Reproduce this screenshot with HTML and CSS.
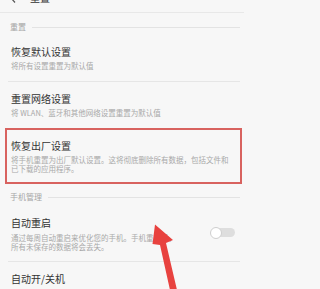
FILE: index.html
```html
<!DOCTYPE html>
<html lang="zh">
<head>
<meta charset="utf-8">
<title>重置</title>
<link rel="stylesheet" href="styles.css">
</head>
<body>
<div class="screen">
  <header class="topbar">
    <span class="back"><svg width="6" height="10" viewBox="0 0 6 10"><polyline points="5,0.5 1,5 5,9.5" fill="none" stroke="#555" stroke-width="1.2"/></svg></span>
    <span class="top-title">重置</span>
  </header>
  <main class="list">
    <div class="section-head"><span>重置</span></div>
    <div class="item">
      <div class="item-title">恢复默认设置</div>
      <div class="item-sub">将所有设置重置为默认值</div>
    </div>
    <div class="item">
      <div class="item-title">重置网络设置</div>
      <div class="item-sub">将 WLAN、蓝牙和其他网络设置重置为默认值</div>
    </div>
    <div class="item item-last item-marked">
      <div class="item-title">恢复出厂设置</div>
      <div class="item-sub">将手机重置为出厂默认设置。这将彻底删除所有数据，包括文件和已下载的应用程序。</div>
    </div>
    <div class="section-head"><span>手机管理</span></div>
    <div class="item item-toggle">
      <div class="item-text">
        <div class="item-title">自动重启</div>
        <div class="item-sub">通过每周自动重启来优化您的手机。手机重启后，所有未保存的数据将会丢失。</div>
      </div>
      <span class="switch"></span>
    </div>
    <div class="item item-last">
      <div class="item-title">自动开/关机</div>
    </div>
  </main>
  <svg class="arrow" width="244" height="289" viewBox="0 0 244 289">
    <polygon points="155,224.5 173,240 166,243 177,290 170,290 160,245 152.5,244" fill="#e8423f"/>
  </svg>
</div>
</body>
</html>
```

FILE: styles.css
```css
html, body {
  margin: 0;
  padding: 0;
  background: #f7f7f7;
}

body {
  font-family: "Noto Sans CJK SC", "Noto Sans", sans-serif;
}

.screen {
  position: relative;
  width: 244px;
  height: 289px;
  overflow: hidden;
}

.topbar {
  height: 12px;
  border-bottom: 1px solid #e8e8e8;
  display: flex;
  align-items: flex-end;
}

.back {
  display: block;
  width: 6px;
  height: 10px;
  margin: 0 0 9px 10px;
}

.back svg {
  display: block;
}

.top-title {
  font-size: 10px;
  line-height: 10px;
  color: #333;
  margin: 0 0 9px 14px;
}

.list {
  margin: 0 4px 0 8px;
}

.section-head {
  display: flex;
  align-items: center;
  padding: 9px 0 3px 2px;
  font-size: 8px;
  line-height: 10px;
  color: #a6a6a6;
}

.section-head::after {
  content: "";
  flex: 1;
  height: 1px;
  background: #e3e3e3;
  margin-left: 6px;
}

.item {
  padding: 11px 8px 11px 3px;
  border-bottom: 1px solid #e6e6e6;
}

.item-last {
  border-bottom: none;
}

.item-title {
  font-size: 10px;
  line-height: 12px;
  color: #333;
}

.item-sub {
  font-size: 7.5px;
  line-height: 9px;
  color: #a9a9a9;
  margin-top: 3px;
}

.item-marked {
  position: relative;
  padding-bottom: 10px;
}

.item-marked::after {
  content: "";
  position: absolute;
  top: -1.5px;
  left: -3px;
  right: -1.5px;
  bottom: -1px;
  border: 2.5px solid #d8625f;
  pointer-events: none;
}

.item-toggle {
  display: flex;
  justify-content: space-between;
  align-items: flex-start;
  padding: 12px 0 10px 3px;
}

.item-text {
  width: 170px;
}

.item-toggle .item-sub {
  margin-top: 4px;
}

.switch {
  position: relative;
  display: block;
  width: 23px;
  height: 9px;
  border-radius: 5px;
  background: #dedede;
  margin: 11px 5px 0 0;
}

.switch::after {
  content: "";
  position: absolute;
  left: -2px;
  top: -1.5px;
  width: 12px;
  height: 12px;
  box-sizing: border-box;
  border-radius: 50%;
  background: #fff;
  border: 1px solid #cfcfcf;
}

.arrow {
  position: absolute;
  left: 0;
  top: 0;
  pointer-events: none;
}
```
